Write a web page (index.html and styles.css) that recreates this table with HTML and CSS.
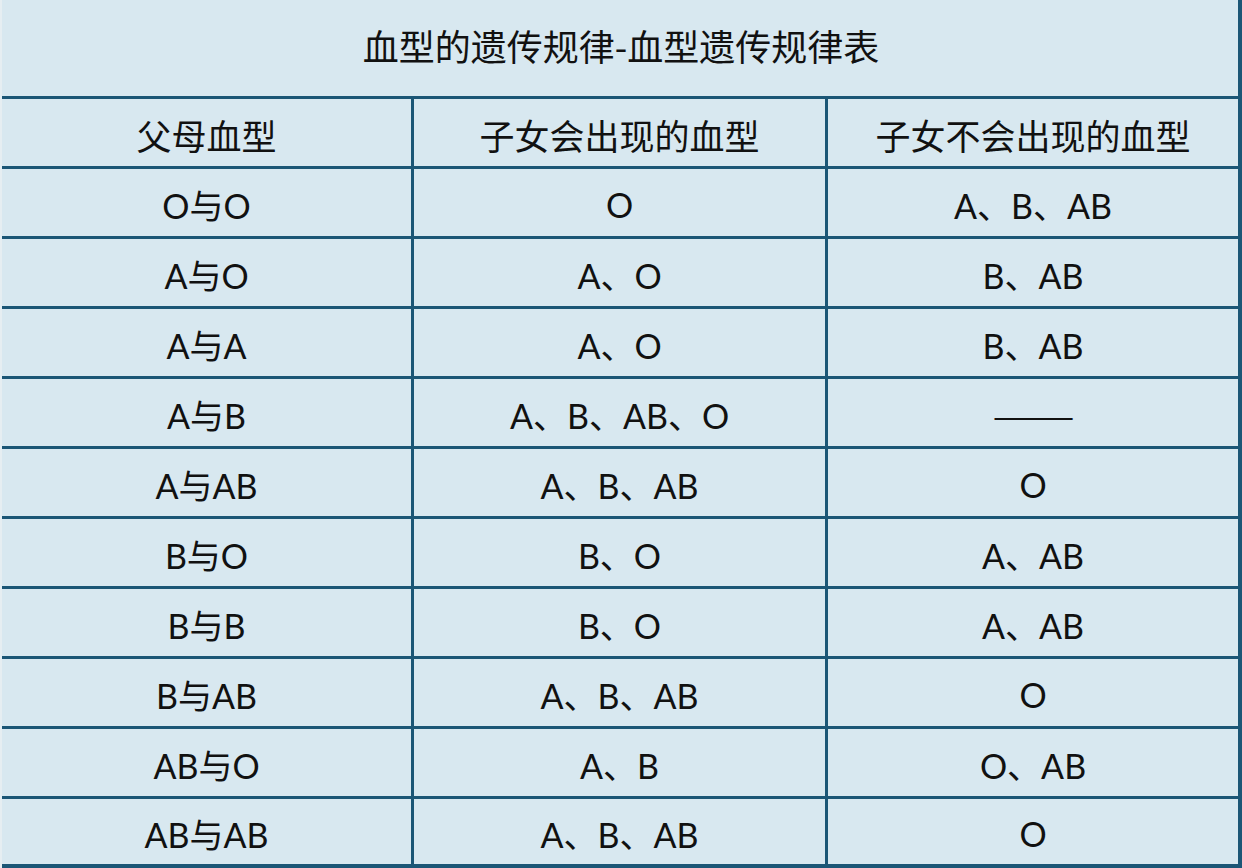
FILE: index.html
```html
<!DOCTYPE html>
<html lang="zh-CN">
<head>
<meta charset="utf-8">
<title>血型的遗传规律</title>
<link rel="stylesheet" href="styles.css">
</head>
<body>
<div class="sheet">
  <div class="title">血型的遗传规律-血型遗传规律表</div>
  <div class="row head">
    <div class="cell c1">父母血型</div>
    <div class="cell c2">子女会出现的血型</div>
    <div class="cell c3">子女不会出现的血型</div>
  </div>
  <div class="row">
    <div class="cell c1">O与O</div>
    <div class="cell c2">O</div>
    <div class="cell c3">A、B、AB</div>
  </div>
  <div class="row">
    <div class="cell c1">A与O</div>
    <div class="cell c2">A、O</div>
    <div class="cell c3">B、AB</div>
  </div>
  <div class="row">
    <div class="cell c1">A与A</div>
    <div class="cell c2">A、O</div>
    <div class="cell c3">B、AB</div>
  </div>
  <div class="row">
    <div class="cell c1">A与B</div>
    <div class="cell c2">A、B、AB、O</div>
    <div class="cell c3"><span class="dash">——</span></div>
  </div>
  <div class="row">
    <div class="cell c1">A与AB</div>
    <div class="cell c2">A、B、AB</div>
    <div class="cell c3">O</div>
  </div>
  <div class="row">
    <div class="cell c1">B与O</div>
    <div class="cell c2">B、O</div>
    <div class="cell c3">A、AB</div>
  </div>
  <div class="row">
    <div class="cell c1">B与B</div>
    <div class="cell c2">B、O</div>
    <div class="cell c3">A、AB</div>
  </div>
  <div class="row">
    <div class="cell c1">B与AB</div>
    <div class="cell c2">A、B、AB</div>
    <div class="cell c3">O</div>
  </div>
  <div class="row">
    <div class="cell c1">AB与O</div>
    <div class="cell c2">A、B</div>
    <div class="cell c3">O、AB</div>
  </div>
  <div class="row last">
    <div class="cell c1">AB与AB</div>
    <div class="cell c2">A、B、AB</div>
    <div class="cell c3">O</div>
  </div>
</div>
</body>
</html>
```
FILE: styles.css
```css
html, body {
  margin: 0;
  padding: 0;
  background: #d8e8f0;
}
.sheet {
  width: 1242px;
  height: 868px;
  overflow: hidden;
  box-sizing: border-box;
  background: #d8e8f0;
  border-left: 2px solid #e6eef2;
  font-family: "Noto Sans CJK SC", "Noto Sans", sans-serif;
  color: #111111;
  display: flex;
  flex-direction: column;
}
.title {
  height: 96px;
  box-sizing: border-box;
  border-right: 4px solid #1b5676;
  display: flex;
  align-items: center;
  justify-content: center;
  font-size: 36px;
  padding-bottom: 6px;
  padding-left: 2px;
}
.row {
  height: 70px;
  box-sizing: border-box;
  border-top: 3px solid #1b5676;
  border-right: 4px solid #1b5676;
  display: grid;
  grid-template-columns: 409px 414px 413px;
}
.row.last {
  height: 72px;
  border-bottom: 4px solid #1b5676;
}
.cell {
  display: flex;
  align-items: center;
  justify-content: center;
  font-family: "Lato", "Noto Sans CJK SC", sans-serif;
  font-size: 34px;
  padding-top: 4px;
  white-space: nowrap;
}
.head .cell {
  font-family: "Noto Sans CJK SC", sans-serif;
  font-size: 35px;
}
.c2, .c3 {
  border-left: 3px solid #1b5676;
}
.dash {
  display: inline-block;
  font-family: "Noto Sans CJK SC", sans-serif;
  transform: scaleX(1.45);
}
```
